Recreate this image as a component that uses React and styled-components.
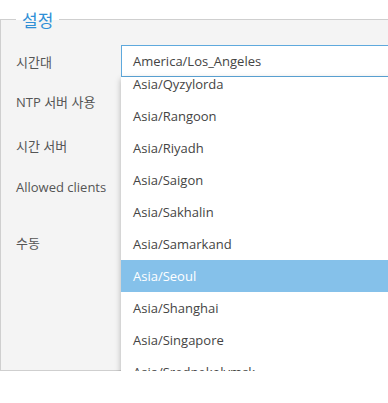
import React from 'react';
import styled, { createGlobalStyle } from 'styled-components';

const GlobalStyle = createGlobalStyle`
    html {
        overflow: hidden;
    }
    body {
        margin: 0;
        padding: 0;
        background: #fff;
        font-family: "Open Sans", "Noto Sans CJK KR", sans-serif;
        font-size: 13px;
        color: #555;
    }
`;

const zones = [
    'Asia/Qyzylorda',
    'Asia/Rangoon',
    'Asia/Riyadh',
    'Asia/Saigon',
    'Asia/Sakhalin',
    'Asia/Samarkand',
    'Asia/Seoul',
    'Asia/Shanghai',
    'Asia/Singapore',
    'Asia/Srednekolymsk',
];

const rows = [
    { label: '시간대', height: 32, select: true },
    { label: 'NTP 서버 사용', height: 48 },
    { label: '시간 서버', height: 40 },
    { label: 'Allowed clients', height: 44 },
    { label: '수동', height: 66 },
];

export default function App() {
    return (
        <>
            <GlobalStyle />
            <Panel>
                <Legend>설정</Legend>
                <Form>
                    {rows.map((row) => (
                        <Row key={row.label} $height={row.height}>
                            <Label>{row.label}</Label>
                            {row.select && (
                                <SelectWrap>
                                    <Select>America/Los_Angeles</Select>
                                    <Menu>
                                        <MenuList>
                                            {zones.map((z) => (
                                                <Option key={z} $active={z === 'Asia/Seoul'}>
                                                    {z}
                                                </Option>
                                            ))}
                                        </MenuList>
                                    </Menu>
                                </SelectWrap>
                            )}
                        </Row>
                    ))}
                </Form>
            </Panel>
        </>
    );
}

const Panel = styled.section`
    margin-top: 19px;
    width: 440px;
    height: 352px;
    box-sizing: border-box;
    padding: 0 15px;
    border: 1px solid #cfcfcf;
    background: #f4f4f4;
`;

const Legend = styled.div`
    width: fit-content;
    margin: -10px 0 0 0;
    padding: 0 6px;
    font-size: 17px;
    line-height: 20px;
    color: #2f8fd6;
    font-family: "Noto Sans CJK KR", sans-serif;
    background: linear-gradient(#fff 50%, #f4f4f4 50%);
`;

const Form = styled.div`
    display: flex;
    flex-direction: column;
    padding-top: 15px;
`;

const Row = styled.div`
    display: grid;
    grid-template-columns: 105px 1fr;
    align-items: center;
    height: ${(p) => p.$height}px;
`;

const Label = styled.span`
    color: #555;
    font-family: "Open Sans", "Noto Sans CJK KR", sans-serif;
`;

const SelectWrap = styled.div`
    position: relative;
    height: 100%;
`;

const Select = styled.div`
    box-sizing: border-box;
    height: 32px;
    border: 1px solid #5ea9dd;
    background: #fff;
    padding: 0 11px;
    display: flex;
    align-items: center;
    color: #444;
    font-size: 13px;
`;

const Menu = styled.div`
    position: absolute;
    top: 32px;
    left: 0;
    right: 0;
    height: 299px;
    background: #fff;
    overflow: hidden;
    box-shadow: 0 2px 6px rgba(0, 0, 0, 0.28);
    z-index: 10;
`;

const MenuList = styled.ul`
    list-style: none;
    margin: -9px 0 0 0;
    padding: 0;
`;

const Option = styled.li`
    height: 32px;
    line-height: 32px;
    padding: 0 12px;
    font-size: 13px;
    color: ${(p) => (p.$active ? '#fff' : '#444')};
    background: ${(p) => (p.$active ? '#85c1ea' : 'transparent')};
`;
